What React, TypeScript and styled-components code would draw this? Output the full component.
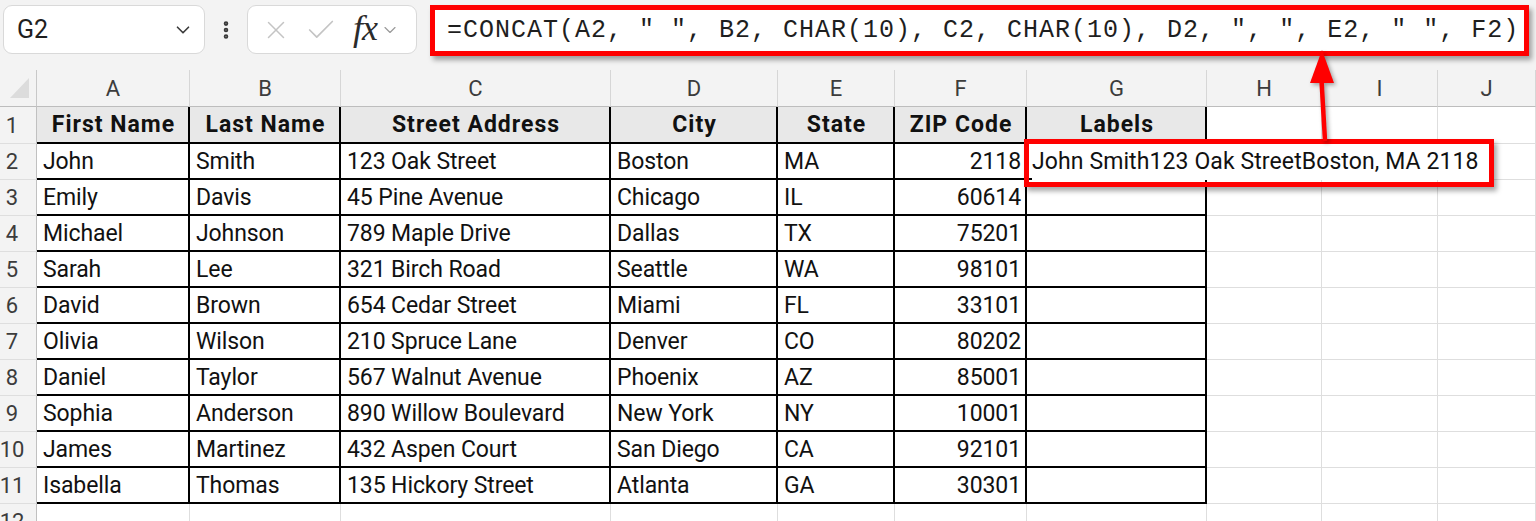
import React from "react";
import styled, { createGlobalStyle } from "styled-components";
import { ChevronDown, X, Check, EllipsisVertical } from "lucide-react";

const Global = createGlobalStyle`
  html, body { margin: 0; padding: 0; background: #ffffff; }
  body { font-family: Roboto, "Noto Sans", sans-serif; overflow: hidden; }
  * { box-sizing: border-box; }
`;

const COLS = [153, 151, 270, 167, 117, 132, 180, 115, 116];
const LETTERS = ["A", "B", "C", "D", "E", "F", "G", "H", "I", "J"];

const HEAD = ["First Name", "Last Name", "Street Address", "City", "State", "ZIP Code", "Labels"];
const DATA: string[][] = [
  ["John", "Smith", "123 Oak Street", "Boston", "MA", "2118"],
  ["Emily", "Davis", "45 Pine Avenue", "Chicago", "IL", "60614"],
  ["Michael", "Johnson", "789 Maple Drive", "Dallas", "TX", "75201"],
  ["Sarah", "Lee", "321 Birch Road", "Seattle", "WA", "98101"],
  ["David", "Brown", "654 Cedar Street", "Miami", "FL", "33101"],
  ["Olivia", "Wilson", "210 Spruce Lane", "Denver", "CO", "80202"],
  ["Daniel", "Taylor", "567 Walnut Avenue", "Phoenix", "AZ", "85001"],
  ["Sophia", "Anderson", "890 Willow Boulevard", "New York", "NY", "10001"],
  ["James", "Martinez", "432 Aspen Court", "San Diego", "CA", "92101"],
  ["Isabella", "Thomas", "135 Hickory Street", "Atlanta", "GA", "30301"],
];

const Page = styled.div`
  position: relative;
  width: 1536px;
  height: 521px;
  overflow: hidden;
  background: #ffffff;
`;

const Toolbar = styled.div`
  height: 70px;
  background: #f3f3f3;
  display: flex;
  align-items: flex-start;
  padding: 5px 0 0 3px;
`;

const NameBox = styled.div`
  width: 202px;
  height: 49px;
  background: #ffffff;
  border: 1px solid #d9d9d9;
  border-radius: 9px;
  display: flex;
  align-items: center;
  justify-content: space-between;
  padding: 0 10px 0 13px;
  font-family: Roboto, sans-serif;
  font-size: 25px;
  color: #1f1f1f;
`;

const Dots = styled.div`
  width: 42px;
  height: 49px;
  display: flex;
  align-items: center;
  justify-content: center;
  color: #3a3a3a;
`;

const IconBox = styled.div`
  width: 170px;
  height: 49px;
  background: #ffffff;
  border: 1px solid #d9d9d9;
  border-radius: 9px;
  display: flex;
  align-items: center;
  padding: 0 0 0 11px;
  color: #c4c4c4;
`;

const IconSlot = styled.span<{ $w: number }>`
  width: ${(p) => p.$w}px;
  display: flex;
  align-items: center;
  justify-content: center;
`;

const Fx = styled.span`
  font-family: "Liberation Serif", serif;
  font-style: italic;
  font-size: 36px;
  color: #2b2b2b;
  letter-spacing: -1px;
  line-height: 1;
  margin: 0 3px 4px 4px;
`;

const FormulaBar = styled.div`
  margin-left: 13px;
  width: 1099px;
  height: 51px;
  background: #ffffff;
  border: 5px solid #ff0000;
  box-shadow: 3px 4px 5px rgba(0, 0, 0, 0.35);
  display: flex;
  align-items: center;
  padding-left: 12px;
  font-family: "Liberation Mono", monospace;
  font-size: 25px;
  letter-spacing: 1px;
  color: #1e1e1e;
  white-space: pre;
`;

const Sheet = styled.div`
  display: grid;
  grid-template-columns: 37px ${COLS.map((c) => `${c}px`).join(" ")} 1fr;
  grid-template-rows: 37px 37px repeat(11, 36px);
`;

const Corner = styled.div`
  background: #f3f3f3;
  border-right: 1px solid #c8c8c8;
  border-bottom: 1px solid #bdbdbd;
  display: flex;
  align-items: flex-end;
  padding: 0 7px 8px 10px;
`;

const Triangle = styled.div`
  width: 20px;
  height: 20px;
  background: #dcdcdc;
  clip-path: polygon(100% 0, 100% 100%, 0 100%);
`;

const ColHead = styled.div`
  background: #f3f3f3;
  border-right: 1px solid #d6d6d6;
  border-bottom: 1px solid #bdbdbd;
  display: flex;
  align-items: center;
  justify-content: center;
  font-family: Roboto, sans-serif;
  font-size: 22px;
  color: #3c3c3c;
`;

const RowHead = styled.div`
  background: #f3f3f3;
  border-right: 1px solid #c0c0c0;
  border-bottom: 1px solid #dedede;
  display: flex;
  align-items: center;
  justify-content: center;
  padding-right: 12px;
  font-family: Roboto, sans-serif;
  font-size: 22px;
  color: #3c3c3c;
`;

const Cell = styled.div<{ $table?: boolean; $head?: boolean; $align?: "left" | "right" | "center" }>`
  position: relative;
  background: ${(p) => (p.$head ? "#e8e8e8" : "#ffffff")};
  border-right: ${(p) => (p.$table ? "2px solid #000" : "1px solid #dedede")};
  border-bottom: ${(p) => (p.$table ? "2px solid #000" : "1px solid #dedede")};
  display: flex;
  align-items: center;
  justify-content: ${(p) =>
    p.$align === "right" ? "flex-end" : p.$align === "center" ? "center" : "flex-start"};
  padding: 0 4px 0 6px;
  font-family: Roboto, sans-serif;
  font-size: 23px;
  font-weight: ${(p) => (p.$head ? 700 : 400)};
  letter-spacing: ${(p) => (p.$head ? "1px" : "-0.1px")};
  color: #111;
  white-space: nowrap;
  overflow: visible;
`;

const Overflow = styled.span`
  position: relative;
  z-index: 2;
  align-self: stretch;
  display: flex;
  align-items: center;
  margin: 0 0 -2px -1px;
  padding: 0 10px 2px 0;
  background: #ffffff;
  letter-spacing: 0.1px;
`;

const LabelMark = styled.div`
  position: absolute;
  left: 1024px;
  top: 139px;
  width: 470px;
  height: 48px;
  border: 5px solid #ff0000;
  box-shadow: 3px 4px 5px rgba(0, 0, 0, 0.35);
  z-index: 5;
  pointer-events: none;
`;

const Arrow = styled.svg`
  position: absolute;
  left: 1300px;
  top: 48px;
  z-index: 6;
  overflow: visible;
  filter: drop-shadow(2px 2px 2px rgba(0, 0, 0, 0.35));
`;

export default function App() {
  const formula = `=CONCAT(A2, " ", B2, CHAR(10), C2, CHAR(10), D2, ", ", E2, " ", F2)`;
  const rows: React.ReactNode[] = [];

  rows.push(<Corner key="corner"><Triangle /></Corner>);
  LETTERS.forEach((l) => rows.push(<ColHead key={`h${l}`}>{l}</ColHead>));

  rows.push(<RowHead key="r1">1</RowHead>);
  HEAD.forEach((h, i) =>
    rows.push(
      <Cell key={`1-${i}`} $table $head $align="center">
        {h}
      </Cell>
    )
  );
  for (let i = 0; i < 3; i++) rows.push(<Cell key={`1-e${i}`} />);

  DATA.forEach((r, ri) => {
    const n = ri + 2;
    rows.push(<RowHead key={`r${n}`}>{n}</RowHead>);
    r.forEach((v, ci) =>
      rows.push(
        <Cell key={`${n}-${ci}`} $table $align={ci === 5 ? "right" : "left"}>
          {v}
        </Cell>
      )
    );
    rows.push(
      <Cell key={`${n}-g`} $table>
        {n === 2 ? <Overflow>John Smith123 Oak StreetBoston, MA 2118</Overflow> : null}
      </Cell>
    );
    for (let i = 0; i < 3; i++) rows.push(<Cell key={`${n}-e${i}`} />);
  });

  rows.push(<RowHead key="r12">12</RowHead>);
  for (let i = 0; i < 10; i++) rows.push(<Cell key={`12-${i}`} />);

  return (
    <Page>
      <Global />
      <Toolbar>
        <NameBox>
          <span>G2</span>
          <ChevronDown size={22} strokeWidth={1.8} color="#3a3a3a" />
        </NameBox>
        <Dots>
          <EllipsisVertical size={22} strokeWidth={3} />
        </Dots>
        <IconBox>
          <IconSlot $w={34}>
            <X size={30} strokeWidth={1.2} />
          </IconSlot>
          <IconSlot $w={56}>
            <Check size={34} strokeWidth={1.2} />
          </IconSlot>
          <Fx>fx</Fx>
          <ChevronDown size={20} strokeWidth={1.4} color="#9a9a9a" />
        </IconBox>
        <FormulaBar>{formula}</FormulaBar>
      </Toolbar>
      <Sheet>{rows}</Sheet>
      <LabelMark />
      <Arrow width="40" height="95" viewBox="1300 48 40 95">
        <polygon points="1322,50 1310,83 1334,83" fill="#ff0000" />
        <line x1="1321.5" y1="80" x2="1325" y2="141" stroke="#ff0000" strokeWidth="4.5" />
      </Arrow>
    </Page>
  );
}
